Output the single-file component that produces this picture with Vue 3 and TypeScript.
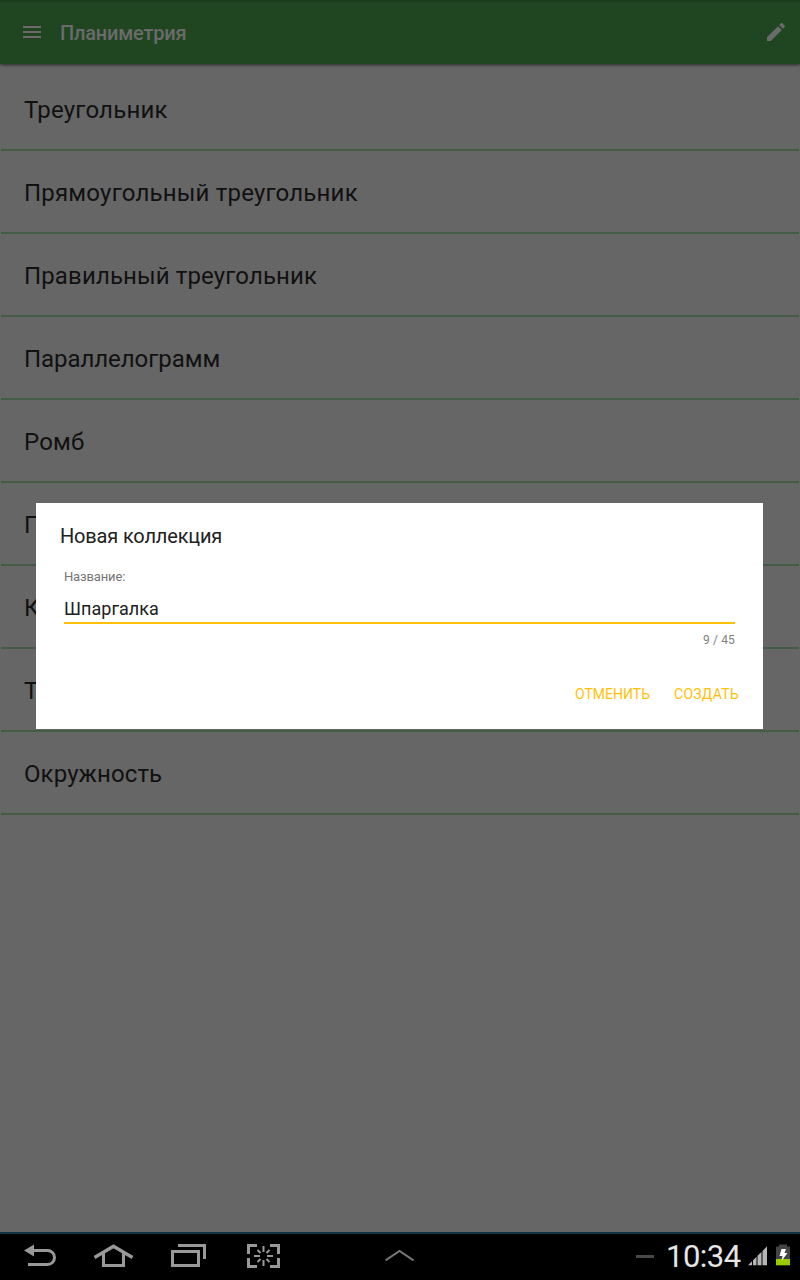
<script setup lang="ts">
interface Topic {
  title: string
  spacing: string
}

const topics: Topic[] = [
  { title: 'Треугольник', spacing: '0.22px' },
  { title: 'Прямоугольный треугольник', spacing: '0.2px' },
  { title: 'Правильный треугольник', spacing: '0.13px' },
  { title: 'Параллелограмм', spacing: '-0.06px' },
  { title: 'Ромб', spacing: '0.15px' },
  { title: 'П', spacing: '0' },
  { title: 'К', spacing: '0' },
  { title: 'Т', spacing: '0' },
  { title: 'Окружность', spacing: '0.1px' },
]
</script>

<template>
  <div class="screen">
    <header class="toolbar">
      <svg class="menu" width="18" height="12" viewBox="0 0 18 12">
        <path d="M0 0h18v2H0zM0 5h18v2H0zM0 10h18v2H0z" fill="#6b6b6b" />
      </svg>
      <h1 class="heading">Планиметрия</h1>
      <svg class="pencil" width="24" height="24" viewBox="0 0 24 24">
        <path d="M3 17.25V21h3.75L17.81 9.94l-3.75-3.75L3 17.25zM20.71 7.04c.39-.39.39-1.02 0-1.41l-2.34-2.34c-.39-.39-1.02-.39-1.41 0l-1.83 1.83 3.75 3.75 1.83-1.83z" fill="#6b6b6b" />
      </svg>
    </header>

    <ul class="topics">
      <li v-for="t in topics" :key="t.title" class="topic">
        <span :style="{ letterSpacing: t.spacing }">{{ t.title }}</span>
      </li>
    </ul>

    <nav class="navbar">
      <svg class="nav-left" width="300" height="46" viewBox="0 1234 300 46">
        <g fill="none" stroke="#999" stroke-width="3">
          <path d="M33 1250.500h14.500a7 7 0 0 1 0 14H28" />
          <path d="M94.500 1257.500L113.500 1246.300L132.500 1257.500" stroke-width="3.400" />
          <path d="M103.500 1252V1265.500H123.500V1252" />
          <path d="M172.500 1251.500H198.500V1265.500H172.500Z" />
          <path d="M178 1245.500H204.500V1259" />
          <path d="M248.500 1254V1245.500H257M270 1245.500H278.500V1254M278.500 1258V1266.500H270M257 1266.500H248.500V1258" />
        </g>
        <path d="M24 1250.500L34 1244.500V1256.500Z" fill="#999" />
        <path d="M263.500 1246v6M263.500 1260v6M254 1256h6M267 1256h6M257.500 1250l3 3M269.500 1250l-3 3M257.500 1262l3-3M269.500 1262l-3-3" fill="none" stroke="#999" stroke-width="2" />
      </svg>
      <svg class="nav-up" width="30" height="46" viewBox="385 1234 30 46">
        <path d="M385.500 1260.300L399.500 1251L413.500 1260.300" fill="none" stroke="#777" stroke-width="2" />
      </svg>
      <div class="status">
        <span class="dash"></span>
        <span class="clock">10:34</span>
        <svg class="indicators" width="46" height="46" viewBox="745 1234 46 46">
          <path d="M748 1265.300L752 1261.300V1265.300ZM753 1260.300L756.500 1256.800V1265.300H753ZM757.500 1255.800L761.500 1252V1265.300H757.500ZM762.500 1251L767 1246.300V1265.300H762.500Z" fill="#b5b5b5" />
          <path d="M779 1244.500H787V1246.500H790V1259H776V1246.500H779Z" fill="#444" />
          <path d="M776 1259H790V1265.300H776Z" fill="#9c0" />
          <path d="M781.500 1249H786L784.500 1253H787.500L781.500 1261L782.500 1256H779.500Z" fill="#fff" />
        </svg>
      </div>
    </nav>

    <div class="overlay">
      <section class="dialog">
        <h2 class="title">Новая коллекция</h2>
        <div class="field">
          <label class="label">Название:</label>
          <div class="value">Шпаргалка</div>
          <div class="counter">9 / 45</div>
        </div>
        <div class="actions">
          <span class="action cancel">ОТМЕНИТЬ</span>
          <span class="action create">СОЗДАТЬ</span>
        </div>
      </section>
    </div>
  </div>
</template>

<style>
body {
  margin: 0;
}
</style>

<style scoped>
.screen {
  position: relative;
  display: flex;
  flex-direction: column;
  width: 800px;
  height: 1280px;
  overflow: hidden;
  background: #666;
  font-family: Roboto, "Noto Sans", sans-serif;
}

.toolbar {
  display: flex;
  align-items: center;
  box-sizing: border-box;
  flex: none;
  height: 64px;
  padding: 0 12px 0 23px;
  background: linear-gradient(#193a1a 0, #1f4621 3px);
  box-shadow: 0 1px 3px rgba(0, 0, 0, 0.6);
}

.heading {
  flex: 1;
  margin: 2px 0 0 19px;
  color: #6b6b6b;
  font-size: 20px;
  font-weight: 500;
  letter-spacing: -0.2px;
  line-height: 24px;
}

.topics {
  flex: 1;
  margin: 0;
  padding: 4px 1px 0;
  list-style: none;
}

.topic {
  box-sizing: border-box;
  height: 83px;
  padding: 27px 0 0 23px;
  border-bottom: 2px solid #445b45;
  color: #111;
  font-size: 24px;
  line-height: 30px;
  white-space: nowrap;
}

.navbar {
  display: flex;
  flex: none;
  box-sizing: border-box;
  height: 48px;
  border-top: 2px solid #0e3446;
  background: #000;
}

.nav-up {
  margin-left: 85px;
}

.status {
  display: flex;
  flex: 1;
  align-items: center;
  justify-content: flex-end;
  padding-right: 9px;
}

.dash {
  width: 18px;
  height: 3px;
  margin: 0 12px 1px 0;
  background: #484848;
}

.clock {
  width: 79px;
  color: #e6e6e6;
  font-size: 31px;
  letter-spacing: -0.5px;
  line-height: 46px;
}

.overlay {
  position: absolute;
  inset: 0;
  padding: 503px 37px 0 36px;
}

.dialog {
  box-sizing: border-box;
  height: 226px;
  padding: 20px 24px 0;
  background: #fff;
}

.title {
  margin: 0;
  color: #212121;
  font-size: 20px;
  font-weight: 400;
  letter-spacing: -0.17px;
  line-height: 26px;
}

.field {
  padding: 21px 4px 0;
}

.label {
  display: block;
  color: #757575;
  font-size: 13px;
  letter-spacing: -0.15px;
  line-height: 14px;
}

.value {
  height: 40px;
  box-sizing: border-box;
  padding-top: 13px;
  border-bottom: 2px solid #ffc107;
  color: #212121;
  font-size: 18px;
  letter-spacing: 0.05px;
  line-height: 24px;
}

.counter {
  padding-top: 9px;
  color: #808080;
  font-size: 12px;
  letter-spacing: 0.15px;
  line-height: 14px;
  text-align: right;
}

.actions {
  display: flex;
  justify-content: flex-end;
  gap: 24px;
  padding-top: 37px;
  color: #ffc107;
  font-size: 14px;
  line-height: 20px;
}

.create {
  letter-spacing: 0.25px;
}
</style>
